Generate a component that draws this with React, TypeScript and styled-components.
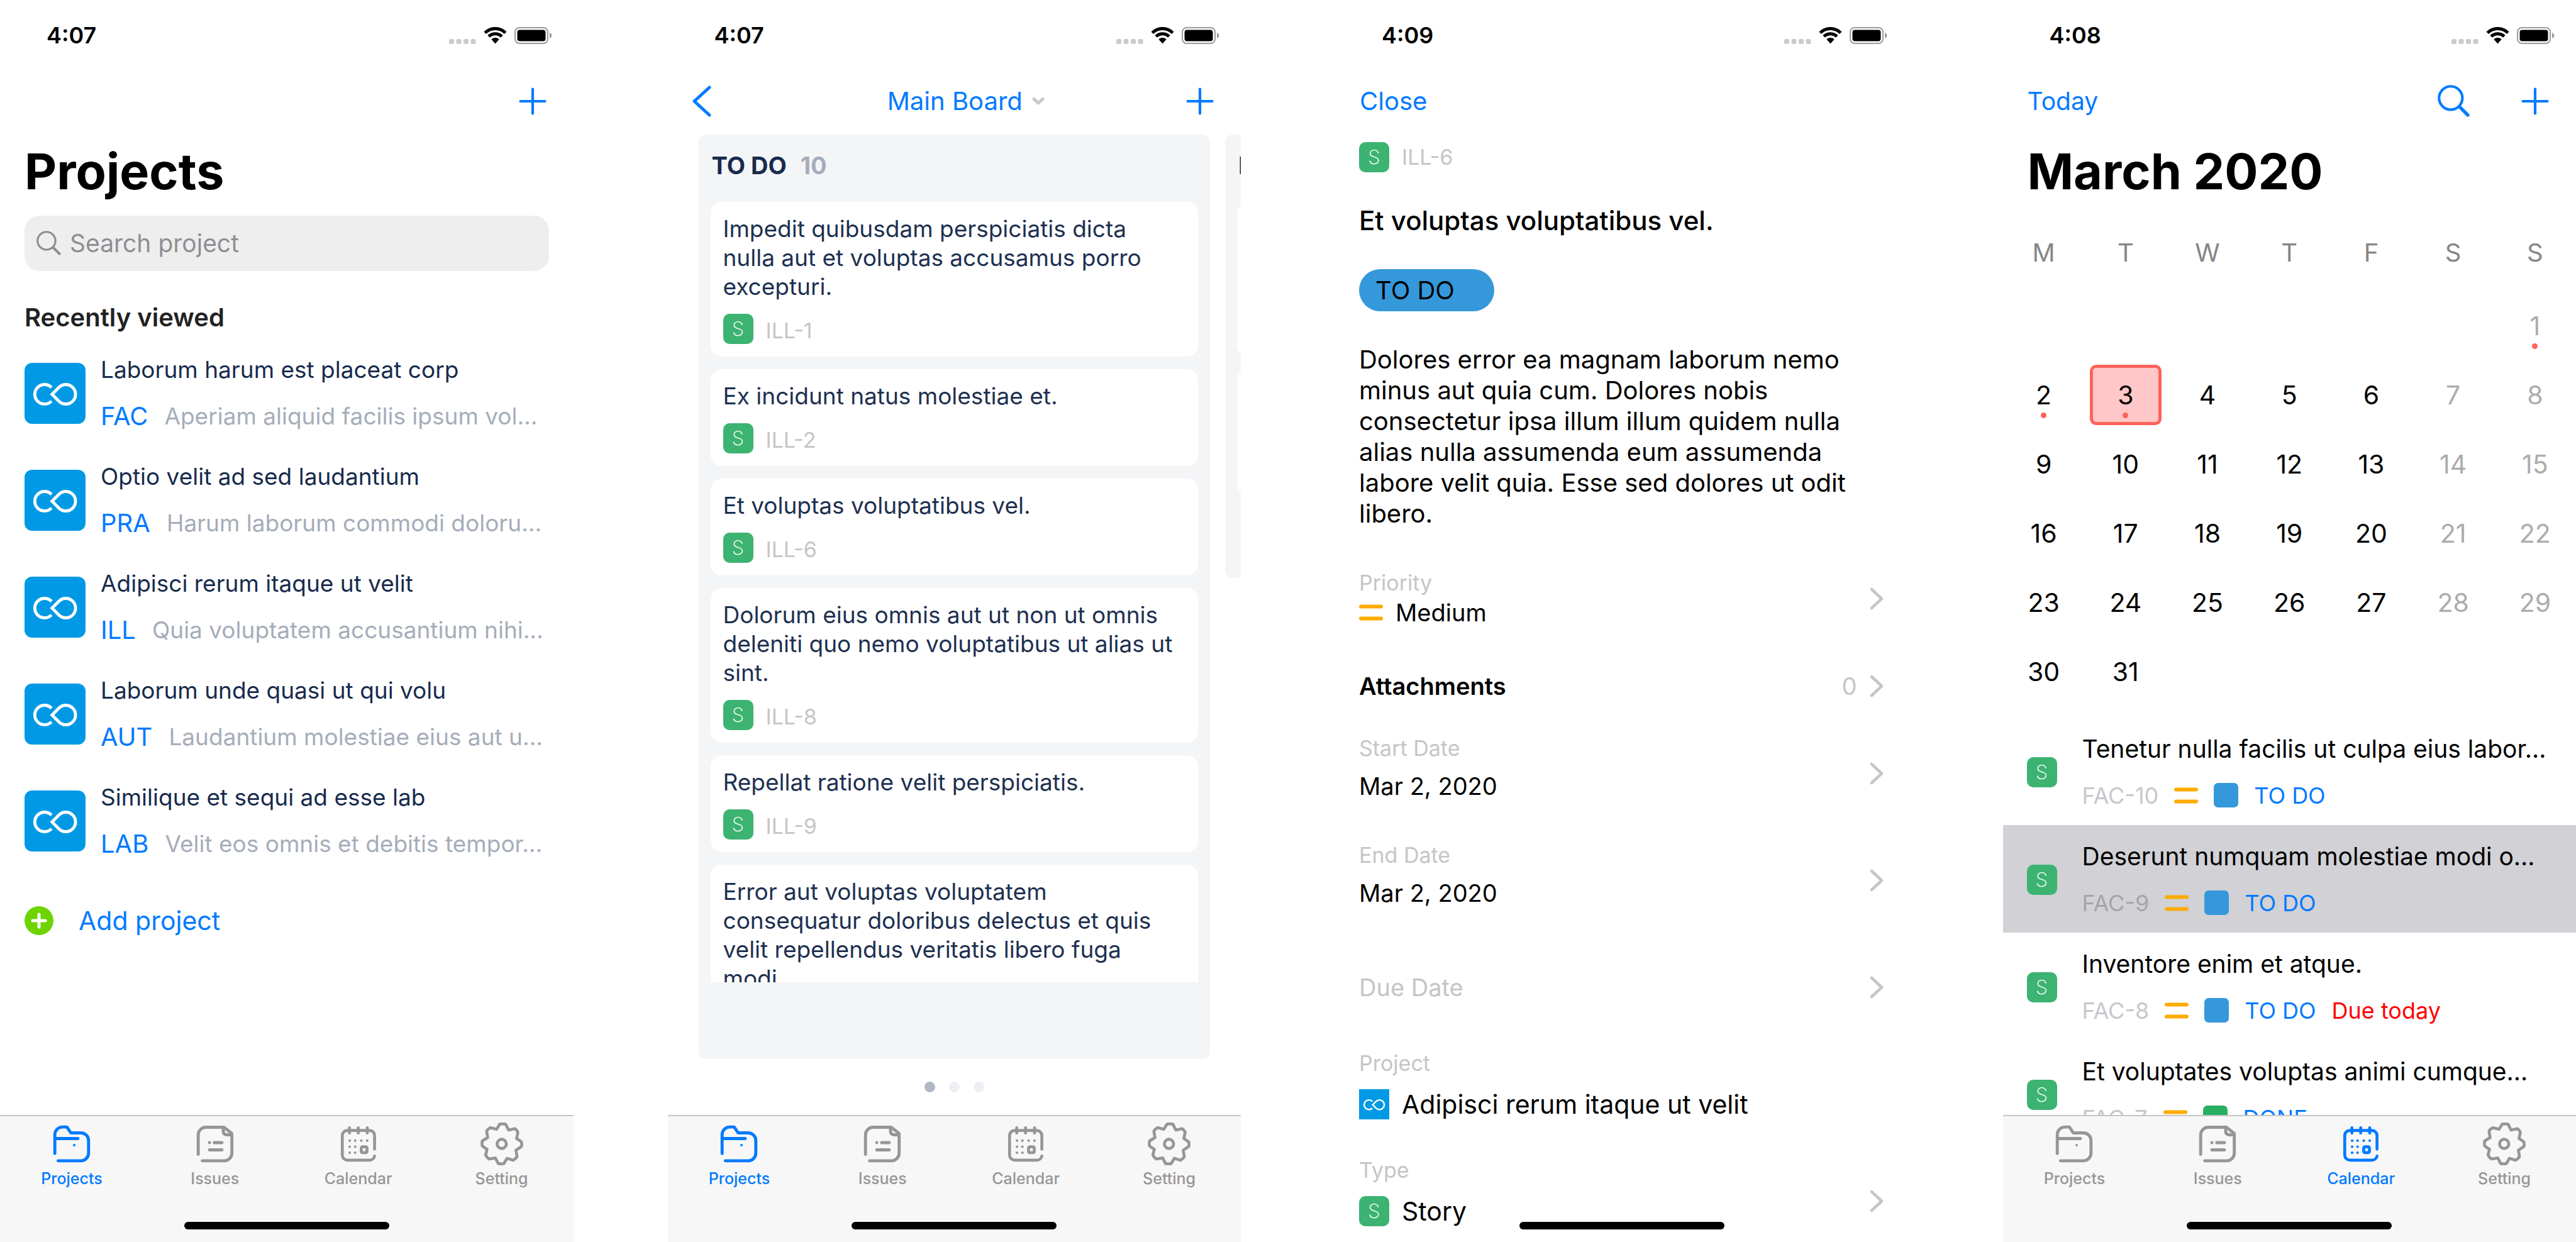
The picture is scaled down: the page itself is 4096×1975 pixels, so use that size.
import React from 'react';
import styled, { createGlobalStyle } from 'styled-components';

const color = {
  blue: '#007aff',
  navy: '#172b4d',
  mist: '#a5adba',
  silver: '#c5c5c7',
  tab: '#969696',
  green: '#3cb371',
  sky: '#0099e5',
  status: '#3498db',
  coral: '#ff6259',
};

const Global = createGlobalStyle`
  *, *::before, *::after { box-sizing: border-box; }
  body {
    margin: 0;
    background: #fff;
    color: #000;
    font-family: Inter, "Liberation Sans", sans-serif;
    font-size: 40px;
  }
  h1, h2, p, ul { margin: 0; padding: 0; }
  ul { list-style: none; }
  button, input { font: inherit; color: inherit; background: none; border: 0; padding: 0; margin: 0; }
  button { cursor: pointer; text-align: left; }
  a { color: inherit; text-decoration: none; }
  svg { display: block; flex: none; }
`;

const Gallery = styled.main`
  display: grid;
  grid-template-columns: repeat(4, minmax(0, 1fr));
  column-gap: 150px;
  height: 100vh;
`;

const Phone = styled.section`
  position: relative;
  display: flex;
  flex-direction: column;
  min-height: 0;
  height: 100%;
  overflow: hidden;
  background: #fff;
`;

/* ---------- status bar ---------- */

const StatusRow = styled.header`
  flex: none;
  display: flex;
  align-items: center;
  justify-content: space-between;
  height: 107px;
  padding: 5px 34px 0 74px;
`;

const Clock = styled.time`
  font-size: 36px;
  font-weight: 600;
`;

const StatusIcons = styled.div`
  display: flex;
  align-items: center;
  gap: 12px;
`;

const StatusBar = ({ time }: { time: string }) => (
  <StatusRow>
    <Clock>{time}</Clock>
    <StatusIcons aria-hidden="true">
      <svg width="43" height="27" viewBox="0 0 43 27" fill="#cbcbcb">
        <rect x="0" y="19" width="8" height="8" rx="2.5" />
        <rect x="11.5" y="19" width="8" height="8" rx="2.5" />
        <rect x="23" y="19" width="8" height="8" rx="2.5" />
        <rect x="34.5" y="19" width="8" height="8" rx="2.5" />
      </svg>
      <svg width="37" height="27" viewBox="0 0 37 27" fill="none" stroke="#000" strokeWidth="5">
        <path d="M2.2 9.2A23 23 0 0 1 34.8 9.2" />
        <path d="M8.1 15.1A14.7 14.7 0 0 1 28.9 15.1" />
        <path d="M12.3 19.4A9 9 0 0 1 24.7 19.4L18.5 26.4Z" fill="#000" stroke="none" />
      </svg>
      <svg width="60" height="27" viewBox="0 0 60 27">
        <rect x="1" y="1" width="52" height="25" rx="7" fill="none" stroke="#9b9b9b" strokeWidth="2" />
        <rect x="4.5" y="4.5" width="45" height="18" rx="4" fill="#000" />
        <path d="M56 9v9c2-.8 3.4-2.5 3.4-4.500s-1.400-3.700-3.400-4.500z" fill="#9b9b9b" />
      </svg>
    </StatusIcons>
  </StatusRow>
);

/* ---------- navigation bar ---------- */

const NavBar = styled.nav`
  flex: none;
  display: grid;
  grid-template-columns: 1fr auto 1fr;
  align-items: center;
  height: 107px;
  padding: 0 43px 0 39px;
  color: ${color.blue};
  line-height: 48px;
`;

const NavSide = styled.div<{ $end?: boolean }>`
  display: flex;
  align-items: center;
  gap: 82px;
  justify-content: ${p => (p.$end ? 'flex-end' : 'flex-start')};
`;

const NavTitle = styled.button`
  display: flex;
  align-items: center;
  gap: 15px;
  padding-left: 41px;
`;

const TextButton = styled.button<{ $compact?: boolean }>`
  font-size: ${p => (p.$compact ? 39 : 40)}px;
`;

const PlusIcon = () => (
  <svg width="44" height="44" viewBox="0 0 44 44" stroke="currentColor" strokeWidth="4.200" strokeLinecap="round">
    <path d="M22 2.500V41.500M2.500 22H41.500" />
  </svg>
);

const SearchIcon = ({ size, weight = 4 }: { size: number; weight?: number }) => (
  <svg width={size} height={size} viewBox="0 0 49 49" fill="none" stroke="currentColor" strokeWidth={weight} strokeLinecap="round">
    <circle cx="20" cy="20" r="17.800" />
    <path d="M33.500 33.500L46 46" strokeWidth={weight + 1.2} />
  </svg>
);

const Chevron = () => (
  <svg width="22" height="36" viewBox="0 0 22 36" fill="none" stroke={color.silver} strokeWidth="4.500" strokeLinecap="round" strokeLinejoin="round">
    <path d="M3 3L19 18L3 33" />
  </svg>
);

const LargeTitle = styled.h1`
  flex: none;
  padding: 0 39px;
  height: 118px;
  font-size: 79px;
  font-weight: 700;
  line-height: 116px;
`;

/* ---------- shared marks ---------- */

const Badge = styled.span`
  flex: none;
  display: flex;
  align-items: center;
  justify-content: center;
  width: 48px;
  height: 48px;
  border-radius: 10px;
  background: ${color.green};
  color: #fff;
  font-size: 31px;
  font-weight: 200;
  line-height: 48px;
`;

const LogoTile = styled.span<{ $small?: boolean }>`
  flex: none;
  display: block;
  width: ${p => (p.$small ? 48 : 97)}px;
  height: ${p => (p.$small ? 48 : 97)}px;
  border-radius: ${p => (p.$small ? 0 : 12)}px;
  background: ${color.sky};
  svg { width: 100%; height: 100%; }
`;

const Logo = ({ small }: { small?: boolean }) => (
  <LogoTile $small={small} aria-hidden="true">
    <svg viewBox="0 0 146 146" fill="none" stroke="#fff" strokeWidth="7.300">
      <path d="M64.500 59A23.300 23.300 0 1 0 64.500 91.600" />
      <path d="M82.300 58.800A23.300 23.300 0 1 1 82.300 91.800L65.900 75.300Z" />
    </svg>
  </LogoTile>
);

const PriorityIcon = () => (
  <svg width="38" height="28" viewBox="0 0 38 28" stroke="#ffab00" strokeWidth="6" strokeLinecap="round" aria-hidden="true">
    <path d="M3 4.500H35M3 23.500H35" />
  </svg>
);

/* ---------- tab bar ---------- */

const HomeIndicator = styled.div`
  position: absolute;
  left: 50%;
  bottom: 20px;
  width: 326px;
  height: 12px;
  margin-left: -163px;
  border-radius: 6px;
  background: #000;
`;

const TabRow = styled.nav`
  flex: none;
  display: grid;
  grid-template-columns: repeat(4, 1fr);
  align-items: start;
  height: 202px;
  padding-top: 10px;
  border-top: 2px solid #c6c6c6;
  background: #f7f7f7;
`;

const Tab = styled.a<{ $active: boolean }>`
  display: flex;
  flex-direction: column;
  align-items: center;
  gap: 6px;
  color: ${p => (p.$active ? color.blue : color.tab)};
  font-size: 25px;
  font-weight: 500;
  line-height: 30px;
`;

const tabIcons: Record<string, React.ReactNode> = {
  Projects: (
    <svg width="68" height="68" viewBox="-7 -7 102 102" fill="none" stroke="currentColor" strokeWidth="7.300" strokeLinecap="round" strokeLinejoin="round">
      <path d="M3.800 67V22A18.300 18.300 0 0 1 22 3.700H32.500L42 17.700H66A18.300 18.300 0 0 1 84.200 36V66A18.300 18.300 0 0 1 66 84.300H11.500M5 31.200H59" />
      <circle cx="50" cy="47" r="3" fill="currentColor" stroke="none" />
    </svg>
  ),
  Issues: (
    <svg width="68" height="68" viewBox="-7 -7 102 102" fill="none" stroke="currentColor" strokeWidth="7.300" strokeLinecap="round" strokeLinejoin="round">
      <path d="M3.800 69V22.500A18.300 18.300 0 0 1 22 4.300H65L84 19V66A18.300 18.300 0 0 1 66 84.300H13.500" />
      <path d="M63.500 6V15A7.500 7.500 0 0 0 71 22.300H83" />
      <path d="M30.500 41H30.600M42 41H60.500M30.500 58.300H60.500" />
    </svg>
  ),
  Calendar: (
    <svg width="68" height="68" viewBox="-9 -9 102 102" fill="none" stroke="currentColor" strokeWidth="7" strokeLinecap="round" strokeLinejoin="round">
      <path d="M80.400 54.500V22A12 12 0 0 0 68.400 10H15.400A12 12 0 0 0 3.400 22V68.700A12 12 0 0 0 15.400 80.700H68.400A12 12 0 0 0 80.400 71" />
      <path d="M20.500 3.500V16M41.500 3.500V16M63 3.500V16" />
      <rect x="48.600" y="49" width="13.800" height="13.800" rx="3" />
      <path strokeWidth="6.200" d="M21 34.300h.1M34 34.300h.1M48.600 34.300h.1M62.800 34.300h.1M21 48.700h.1M34 48.700h.1M21 63h.1M34 63h.1" />
    </svg>
  ),
  Setting: (
    <svg width="68" height="68" viewBox="0 0 102 102" fill="none" stroke="currentColor" strokeWidth="7" strokeLinejoin="round">
      <path d="M46 3.700Q53 3 60 3.900L67 17.900L82 14.700Q87 18 89.300 23.500L86.100 38L97.500 46Q99 51 97.900 57L84.600 66.300L87.200 81.500Q83.500 87 78 90L63.200 85.300L56 98Q49 99 42.500 98L35.500 84.500L20.500 87Q14.500 83 12.200 77L15.700 64L4.300 56Q3 50 4.300 44L17.200 36L14.500 20.500Q18 15 24 12.200L38.300 16.300Z" />
      <circle cx="50.700" cy="51" r="11" />
    </svg>
  ),
};

const TabBar = ({ active }: { active: string }) => (
  <TabRow>
    {Object.keys(tabIcons).map(name => (
      <Tab key={name} href={`#${name.toLowerCase()}`} $active={name === active}>
        {tabIcons[name]}
        {name}
      </Tab>
    ))}
  </TabRow>
);

/* ---------- projects ---------- */

const Fill = styled.div`
  flex: 1;
  min-height: 0;
  overflow: hidden;
`;

const SearchField = styled.label`
  display: flex;
  align-items: center;
  gap: 14px;
  height: 88px;
  margin: 11px 39px 0;
  padding: 0 19px 2px;
  border-radius: 24px;
  background: #eeeeef;
  color: #8e8e93;
`;

const SearchInput = styled.input`
  flex: 1;
  min-width: 0;
  font-size: 39px;
  outline: none;
  &::placeholder { color: #8e8e93; opacity: 1; }
`;

const SectionTitle = styled.h2`
  height: 109px;
  padding: 50px 39px 0;
  color: #222;
  font-size: 40px;
  font-weight: 600;
  line-height: 48px;
`;

const ProjectLink = styled.a`
  display: flex;
  align-items: center;
  gap: 24px;
  height: 170px;
  padding: 0 38px 0 39px;
`;

const TwoLines = styled.div`
  display: flex;
  flex-direction: column;
  gap: 28px;
  min-width: 0;
  line-height: 46px;
  white-space: nowrap;
`;

const ProjectName = styled.span`
  color: ${color.navy};
  font-size: 37px;
`;

const ProjectMeta = styled.span`
  display: flex;
  gap: 26px;
  color: ${color.mist};
  font-size: 37px;
`;

const ProjectKey = styled.span`
  color: ${color.blue};
  font-size: 40px;
`;

const AddProject = styled.button`
  display: flex;
  align-items: center;
  gap: 40px;
  height: 148px;
  padding: 0 39px;
  color: ${color.blue};
  font-size: 41px;
`;

const projects = [
  ['Laborum harum est placeat corp', 'FAC', 'Aperiam aliquid facilis ipsum vol…'],
  ['Optio velit ad sed laudantium', 'PRA', 'Harum laborum commodi doloru…'],
  ['Adipisci rerum itaque ut velit', 'ILL', 'Quia voluptatem accusantium nihi…'],
  ['Laborum unde quasi ut qui volu', 'AUT', 'Laudantium molestiae eius aut u…'],
  ['Similique et sequi ad esse lab', 'LAB', 'Velit eos omnis et debitis tempor…'],
];

const ProjectsScreen = () => (
  <Phone>
    <StatusBar time="4:07" />
    <NavBar>
      <NavSide />
      <span />
      <NavSide $end>
        <button aria-label="New project"><PlusIcon /></button>
      </NavSide>
    </NavBar>
    <LargeTitle>Projects</LargeTitle>
    <Fill>
      <SearchField>
        <SearchIcon size={39} />
        <SearchInput type="text" placeholder="Search project" aria-label="Search project" />
      </SearchField>
      <SectionTitle>Recently viewed</SectionTitle>
      <ul>
        {projects.map(([name, key, text]) => (
          <li key={key}>
            <ProjectLink href={`#${key}`}>
              <Logo />
              <TwoLines>
                <ProjectName>{name}</ProjectName>
                <ProjectMeta><ProjectKey>{key}</ProjectKey>{text}</ProjectMeta>
              </TwoLines>
            </ProjectLink>
          </li>
        ))}
      </ul>
      <AddProject>
        <svg width="46" height="46" viewBox="0 0 46 46" aria-hidden="true">
          <circle cx="23" cy="23" r="23" fill="#6dd400" />
          <path d="M23 13V33M13 23H33" stroke="#fff" strokeWidth="5" strokeLinecap="round" />
        </svg>
        Add project
      </AddProject>
    </Fill>
    <TabBar active="Projects" />
    <HomeIndicator />
  </Phone>
);

/* ---------- board ---------- */

const BoardStrip = styled.div`
  flex: 1;
  min-height: 0;
  display: flex;
  align-items: flex-start;
  gap: 24px;
  padding: 0 49px;
  overflow: hidden;
`;

const Column = styled.section<{ $full?: boolean }>`
  flex: 0 0 100%;
  display: flex;
  flex-direction: column;
  height: ${p => (p.$full ? '100%' : 'auto')};
  padding: 0 19px ${p => (p.$full ? 122 : 132)}px;
  border-radius: 12px;
  background: #f4f5f7;
`;

const ColumnTitle = styled.h2`
  flex: none;
  display: flex;
  gap: 22px;
  padding: 26px 2px 35px;
  color: ${color.navy};
  font-size: 38px;
  font-weight: 700;
  line-height: 46px;
`;

const ColumnCount = styled.span`
  color: ${color.mist};
`;

const CardList = styled.ul`
  flex: 1;
  min-height: 0;
  display: flex;
  flex-direction: column;
  gap: 20px;
  overflow: hidden;
`;

const Card = styled.li`
  flex: none;
  display: flex;
  flex-direction: column;
  gap: 20px;
  padding: 20px;
  border-radius: 18px;
  background: #fff;
  color: #1d3050;
  font-size: 37px;
  line-height: 46px;
`;

const CardText = styled.p`
  padding-right: 10px;
`;

const BlankCard = styled.li<{ $lines: number }>`
  height: ${p => 108 + 46 * p.$lines}px;
  border-radius: 18px;
  background: #fff;
`;

const IssueRef = styled.div<{ $centered?: boolean }>`
  display: flex;
  align-items: ${p => (p.$centered ? 'center' : 'flex-end')};
  gap: 20px;
  color: ${color.silver};
  font-size: 34px;
  line-height: 42px;
`;

const Pager = styled.div`
  flex: none;
  display: flex;
  align-items: center;
  justify-content: center;
  gap: 22px;
  height: 89px;
`;

const PagerDot = styled.span<{ $on?: boolean }>`
  width: 17px;
  height: 17px;
  border-radius: 50%;
  background: ${p => (p.$on ? '#b1b8c5' : '#eeeff4')};
`;

const cards = [
  ['Impedit quibusdam perspiciatis dicta nulla aut et voluptas accusamus porro excepturi.', 'ILL-1'],
  ['Ex incidunt natus molestiae et.', 'ILL-2'],
  ['Et voluptas voluptatibus vel.', 'ILL-6'],
  ['Dolorum eius omnis aut ut non ut omnis deleniti quo nemo voluptatibus ut alias ut sint.', 'ILL-8'],
  ['Repellat ratione velit perspiciatis.', 'ILL-9'],
  ['Error aut voluptas voluptatem consequatur doloribus delectus et quis velit repellendus veritatis libero fuga modi.', ''],
];

const BoardScreen = () => (
  <Phone>
    <StatusBar time="4:07" />
    <NavBar>
      <NavSide>
        <button aria-label="Back">
          <svg width="34" height="50" viewBox="0 0 34 50" fill="none" stroke="currentColor" strokeWidth="5" strokeLinecap="round" strokeLinejoin="round">
            <path d="M27 3L3 25L27 47" />
          </svg>
        </button>
      </NavSide>
      <NavTitle>
        Main Board
        <svg width="20" height="14" viewBox="0 0 20 14" fill="none" stroke="#c7c7cc" strokeWidth="5" strokeLinecap="round" strokeLinejoin="round" aria-hidden="true">
          <path d="M3 3.500L10 10L17 3.500" />
        </svg>
      </NavTitle>
      <NavSide $end>
        <button aria-label="New issue"><PlusIcon /></button>
      </NavSide>
    </NavBar>
    <BoardStrip>
      <Column $full>
        <ColumnTitle>TO DO <ColumnCount>10</ColumnCount></ColumnTitle>
        <CardList>
          {cards.map(([text, key]) => (
            <Card key={text}>
              <CardText>{text}</CardText>
              {key && <IssueRef><Badge>S</Badge>{key}</IssueRef>}
            </Card>
          ))}
        </CardList>
      </Column>
      <Column>
        <ColumnTitle>I</ColumnTitle>
        <CardList>
          <BlankCard $lines={3} />
          <BlankCard $lines={2} />
        </CardList>
      </Column>
    </BoardStrip>
    <Pager aria-hidden="true">
      <PagerDot $on />
      <PagerDot />
      <PagerDot />
    </Pager>
    <TabBar active="Projects" />
    <HomeIndicator />
  </Phone>
);

/* ---------- issue detail ---------- */

const Detail = styled.article`
  flex: none;
  display: flex;
  flex-direction: column;
  align-items: flex-start;
  gap: 52px;
  padding: 12px 39px 26px 38px;
`;

const DetailTitle = styled.h1`
  font-size: 42px;
  font-weight: 500;
  line-height: 50px;
`;

const StatusPill = styled.button`
  width: 215px;
  height: 67px;
  padding: 0 26px;
  border-radius: 34px;
  background: ${color.status};
  font-size: 40px;
`;

const Description = styled.p`
  max-width: 800px;
  line-height: 49px;
`;

const Field = styled.button<{ $short?: boolean }>`
  flex: none;
  display: flex;
  align-items: center;
  justify-content: space-between;
  height: ${p => (p.$short ? 108 : 170)}px;
  padding: 0 40px 0 38px;
`;

const FieldText = styled.span<{ $top: number; $gap: number }>`
  align-self: flex-start;
  display: flex;
  flex-direction: column;
  gap: ${p => p.$gap}px;
  padding-top: ${p => p.$top}px;
`;

const FieldLabel = styled.span`
  color: ${color.silver};
  font-size: 34px;
  line-height: 44px;
`;

const FieldValue = styled.span<{ $big?: boolean }>`
  display: flex;
  align-items: center;
  gap: 20px;
  font-size: ${p => (p.$big ? 41 : 38)}px;
  line-height: 48px;
`;

const FieldName = styled.span`
  font-size: 38px;
  font-weight: 600;
`;

const Muted = styled.span`
  display: flex;
  align-items: center;
  gap: 20px;
  color: ${color.silver};
  font-size: 38px;
`;

const DetailScreen = () => (
  <Phone>
    <StatusBar time="4:09" />
    <NavBar>
      <NavSide><TextButton>Close</TextButton></NavSide>
    </NavBar>
    <Detail>
      <IssueRef $centered><Badge>S</Badge>ILL-6</IssueRef>
      <DetailTitle>Et voluptas voluptatibus vel.</DetailTitle>
      <StatusPill>TO DO</StatusPill>
      <Description>
        Dolores error ea magnam laborum nemo minus aut quia cum. Dolores nobis consectetur ipsa illum illum quidem
        nulla alias nulla assumenda eum assumenda labore velit quia. Esse sed dolores ut odit libero.
      </Description>
    </Detail>
    <Field>
      <FieldText $top={38} $gap={1}>
        <FieldLabel>Priority</FieldLabel>
        <FieldValue><PriorityIcon />Medium</FieldValue>
      </FieldText>
      <Chevron />
    </Field>
    <Field $short>
      <FieldName>Attachments</FieldName>
      <Muted>0 <Chevron /></Muted>
    </Field>
    <Field>
      <FieldText $top={23} $gap={14}>
        <FieldLabel>Start Date</FieldLabel>
        <FieldValue>Mar 2, 2020</FieldValue>
      </FieldText>
      <Chevron />
    </Field>
    <Field>
      <FieldText $top={23} $gap={14}>
        <FieldLabel>End Date</FieldLabel>
        <FieldValue>Mar 2, 2020</FieldValue>
      </FieldText>
      <Chevron />
    </Field>
    <Field>
      <Muted>Due Date</Muted>
      <Chevron />
    </Field>
    <Field>
      <FieldText $top={14} $gap={19}>
        <FieldLabel>Project</FieldLabel>
        <FieldValue $big><Logo small />Adipisci rerum itaque ut velit</FieldValue>
      </FieldText>
    </Field>
    <Field>
      <FieldText $top={14} $gap={19}>
        <FieldLabel>Type</FieldLabel>
        <FieldValue $big><Badge>S</Badge>Story</FieldValue>
      </FieldText>
      <Chevron />
    </Field>
    <HomeIndicator />
  </Phone>
);

/* ---------- calendar ---------- */

const Week = styled.div`
  flex: none;
  display: grid;
  grid-template-columns: repeat(7, 1fr);
`;

const WeekdayName = styled.span`
  padding-top: 46px;
  height: 131px;
  color: #868686;
  font-size: 40px;
  line-height: 48px;
  text-align: center;
`;

const Day = styled.button<{ $weekend?: boolean; $selected?: boolean; $marked?: boolean }>`
  position: relative;
  justify-self: center;
  width: 114px;
  height: 96px;
  margin: 7px 0;
  border: 5px solid ${p => (p.$selected ? color.coral : 'transparent')};
  border-radius: 10px;
  background: ${p => (p.$selected ? '#ffc7c7' : 'transparent')};
  color: ${p => (p.$weekend ? '#acacac' : '#000')};
  font-size: 41px;
  line-height: 86px;
  text-align: center;

  &::after {
    content: '';
    display: ${p => (p.$marked ? 'block' : 'none')};
    position: absolute;
    left: 50%;
    bottom: 6px;
    width: 9px;
    height: 9px;
    margin-left: -5px;
    border-radius: 50%;
    background: ${color.coral};
  }
`;

const Agenda = styled.ul`
  flex: 1;
  min-height: 0;
  padding-top: 18px;
  overflow: hidden;
`;

const AgendaItem = styled.li<{ $selected?: boolean }>`
  display: flex;
  align-items: center;
  gap: 40px;
  height: 171px;
  padding: 2px 30px 0 38px;
  background: ${p => (p.$selected ? '#d1d1d6' : 'transparent')};
  color: ${p => (p.$selected ? '#a5a5ab' : '#c7c7cc')};
`;

const AgendaTitle = styled.span`
  color: #000;
  font-size: 39px;
`;

const AgendaMeta = styled.span`
  display: flex;
  align-items: center;
  gap: 25px;
  font-size: 36px;
`;

const StatusSquare = styled.span<{ $done?: boolean }>`
  width: 39px;
  height: 39px;
  border-radius: 7px;
  background: ${p => (p.$done ? '#27ae60' : color.status)};
`;

const StatusName = styled.span`
  color: ${color.blue};
`;

const DueFlag = styled.span`
  color: #ff0000;
`;

const leadingBlanks = 6;
const dayCount = 31;
const markedDays = [1, 2, 3];
const selectedDay = 3;

const agenda = [
  { title: 'Tenetur nulla facilis ut culpa eius labor…', id: 'FAC-10', state: 'TO DO' },
  { title: 'Deserunt numquam molestiae modi o…', id: 'FAC-9', state: 'TO DO', selected: true },
  { title: 'Inventore enim et atque.', id: 'FAC-8', state: 'TO DO', due: 'Due today' },
  { title: 'Et voluptates voluptas animi cumque…', id: 'FAC-7', state: 'DONE' },
];

const CalendarScreen = () => (
  <Phone>
    <StatusBar time="4:08" />
    <NavBar>
      <NavSide><TextButton $compact>Today</TextButton></NavSide>
      <span />
      <NavSide $end>
        <button aria-label="Search"><SearchIcon size={51} /></button>
        <button aria-label="New event"><PlusIcon /></button>
      </NavSide>
    </NavBar>
    <LargeTitle>March 2020</LargeTitle>
    <Week>
      {['M', 'T', 'W', 'T', 'F', 'S', 'S'].map((name, i) => (
        <WeekdayName key={i}>{name}</WeekdayName>
      ))}
    </Week>
    <Week>
      {Array.from({ length: leadingBlanks }, (_, i) => <span key={`blank-${i}`} />)}
      {Array.from({ length: dayCount }, (_, i) => {
        const day = i + 1;
        return (
          <Day
            key={day}
            $weekend={(leadingBlanks + i) % 7 > 4}
            $selected={day === selectedDay}
            $marked={markedDays.includes(day)}
          >
            {day}
          </Day>
        );
      })}
    </Week>
    <Agenda>
      {agenda.map(item => (
        <AgendaItem key={item.id} $selected={item.selected}>
          <Badge>S</Badge>
          <TwoLines>
            <AgendaTitle>{item.title}</AgendaTitle>
            <AgendaMeta>
              {item.id}
              <PriorityIcon />
              <StatusSquare $done={item.state === 'DONE'} />
              <StatusName>{item.state}</StatusName>
              {item.due && <DueFlag>{item.due}</DueFlag>}
            </AgendaMeta>
          </TwoLines>
        </AgendaItem>
      ))}
    </Agenda>
    <TabBar active="Calendar" />
    <HomeIndicator />
  </Phone>
);

export default function App() {
  return (
    <>
      <Global />
      <Gallery>
        <ProjectsScreen />
        <BoardScreen />
        <DetailScreen />
        <CalendarScreen />
      </Gallery>
    </>
  );
}
